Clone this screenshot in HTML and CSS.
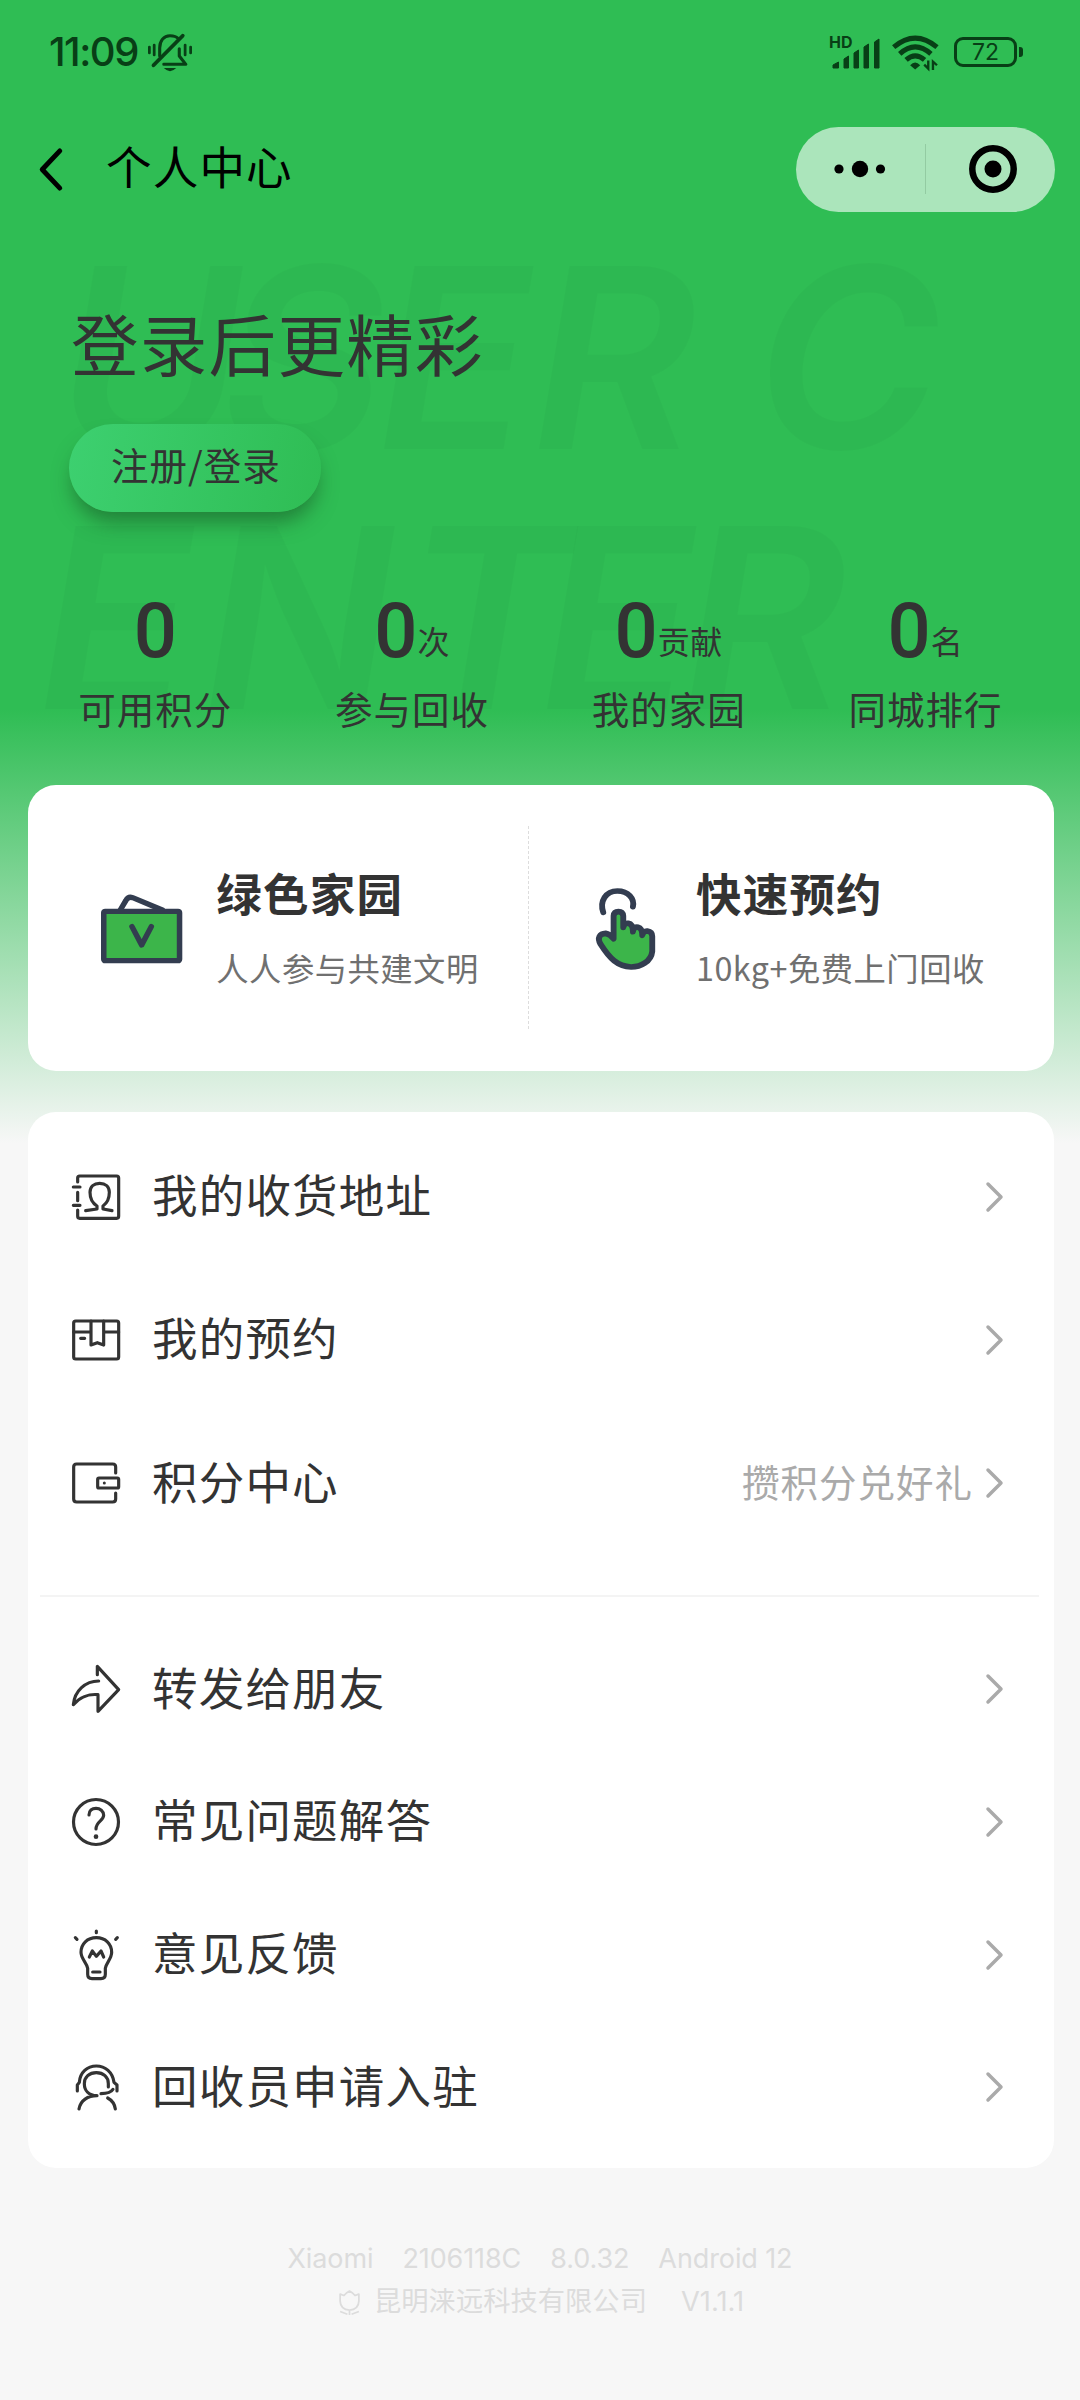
FILE: index.html
```html
<!DOCTYPE html>
<html lang="zh-CN">
<head>
<meta charset="utf-8">
<title>个人中心</title>
<link rel="stylesheet" href="styles.css">
</head>
<body>
<div class="page">
  <div class="watermark" aria-hidden="true"><div class="wm-line wm-first"><span>U</span><span>S</span><span>E</span><span>R</span><span>C</span></div><div class="wm-line wm-second"><span>E</span><span>N</span><span>T</span><span>E</span><span>R</span></div></div>

  <header class="status">
    <span class="time">11:09</span>
    <svg class="bell" viewBox="0 0 128 112" preserveAspectRatio="none" fill="none" stroke="currentColor" stroke-width="9" stroke-linecap="round" stroke-linejoin="round">
      <path d="M4 39V57M18 33V63M108 33V63M124 39V57" stroke-width="8"/>
      <path d="M34 66V42C34 20 46 5 64 5C76 5 84 9 88 14"/>
      <path d="M16 94L101 5" stroke-width="11"/>
      <path d="M91 44V66L110 91H46"/>
      <path d="M46 102H82Q64 121 46 102Z" fill="currentColor" stroke="none"/>
    </svg>
    <span class="spacer"></span>
    <span class="signal"><span class="hd">HD</span>
      <svg viewBox="0 0 50 34" fill="currentColor"><path d="M3 32V29L8.500 26V32ZM14 32V23L18.500 20V32ZM24 32V17L28.500 14V32ZM34 32V11L38.500 8V32ZM44.500 32V6L49 3V32Z" stroke="currentColor" stroke-linejoin="round"/></svg>
    </span>
    <svg class="wifi" viewBox="0 0 140 104" fill="none" stroke="currentColor" stroke-width="15">
      <path d="M5 36Q69-18 134 36"/><path d="M23 56Q69 14 116 56"/><path d="M42 74Q69 50 97 74"/>
      <path d="M54 90Q69 74 84 90L69 103Z" fill="currentColor" stroke="none"/>
      <path d="M96 88L108 100V76M134 90L122 79V104" stroke-width="7"/>
    </svg>
    <span class="battery"><span class="battery-body">72</span><span class="battery-tip"></span></span>
  </header>

  <nav class="nav">
    <svg class="back" viewBox="0 0 24 44" fill="none" stroke="#000" stroke-width="5" stroke-linecap="round" stroke-linejoin="round"><path d="M21 3L3 22L21 41"/></svg>
    <h1 class="nav-title">个人中心</h1>
    <div class="capsule">
      <svg class="dots" viewBox="0 0 52 18"><circle cx="5" cy="9" r="4.6"/><circle cx="26" cy="9" r="8.2"/><circle cx="46.500" cy="9" r="4.600"/></svg>
      <span class="capsule-line"></span>
      <svg class="target" viewBox="0 0 48 48"><circle cx="24" cy="24" r="20.700" fill="none" stroke="#000" stroke-width="6.500"/><circle cx="24" cy="24" r="8.500"/></svg>
    </div>
  </nav>

  <section class="hero">
    <h2 class="hero-title">登录后更精彩</h2>
    <div class="login">注册/登录</div>
    <div class="stats">
      <div class="stat"><div class="num"><b>0</b></div><div class="label">可用积分</div></div>
      <div class="stat"><div class="num"><b>0</b><i>次</i></div><div class="label">参与回收</div></div>
      <div class="stat"><div class="num"><b>0</b><i>贡献</i></div><div class="label">我的家园</div></div>
      <div class="stat"><div class="num"><b>0</b><i>名</i></div><div class="label">同城排行</div></div>
    </div>
  </section>

  <section class="card quick">
    <div class="quick-item">
      <svg class="box-icon" viewBox="0 0 236 208" preserveAspectRatio="none" fill="none" stroke="#333d50" stroke-width="16" stroke-linecap="round" stroke-linejoin="round">
        <path d="M56 48L72 20Q79 6 92 11L178 48"/><rect x="8" y="52" width="220" height="148" rx="4" fill="#3cb54a"/><path d="M90 98L118 153L146 98"/>
      </svg>
      <div><h3>绿色家园</h3><p>人人参与共建文明</p></div>
    </div>
    <span class="quick-line"></span>
    <div class="quick-item quick-right">
      <svg class="hand-icon" viewBox="0 0 171 245" preserveAspectRatio="none" fill="none" stroke="#333d50" stroke-width="17" stroke-linecap="round" stroke-linejoin="round">
        <path d="M21 73C10 40 28 9 62 9C94 9 112 32 107 56"/>
        <path fill="#3cb54a" d="M51 152V84Q52 71 65 71Q78 71 79 84V118Q82 104 94 106Q107 108 107 131Q110 115 122 118Q134 121 134 142Q138 128 149 129Q163 131 163 145V190C160 220 130 237 102 237C62 235 40 212 13 168C3 150 10 137 28 136Q40 138 51 152Z"/>
      </svg>
      <div><h3>快速预约</h3><p>10kg+免费上门回收</p></div>
    </div>
  </section>

  <section class="card menu">
    <div class="row tall">
      <svg class="icon" viewBox="0 0 144 144"><path d="M17 27V15q0-6 6-6H134q6 0 6 6V130q0 6-6 6H23q-6 0-6-6V111M17 58V83M4 42H24M4 97H24M41 113L75 108V99C60 90 54 75 54 58C54 40 66 31 83 31S112 40 112 58C112 75 106 90 93 99V108L120 113"/></svg>
      <span class="name">我的收货地址</span>
      <svg class="arrow" viewBox="0 0 17 30"><path d="M2 2L15 15L2 28"/></svg>
    </div>
    <div class="row tall">
      <svg class="icon" viewBox="0 0 144 144"><rect x="5" y="15" width="135" height="114" rx="6"/><path d="M5 48H57M95 48H140M57 15V87L76 80L95 87V15M26 67H38"/></svg>
      <span class="name">我的预约</span>
      <svg class="arrow" viewBox="0 0 17 30"><path d="M2 2L15 15L2 28"/></svg>
    </div>
    <div class="row tall">
      <svg class="icon" viewBox="0 0 144 144"><path d="M131 42V24q0-9-9-9H14q-9 0-9 9V120q0 9 9 9H122q9 0 9-9V102"/><rect x="77" y="57" width="63" height="30" rx="4"/><circle class="solid" cx="97" cy="72" r="4.500"/></svg>
      <span class="name">积分中心</span>
      <span class="hint">攒积分兑好礼</span>
      <svg class="arrow" viewBox="0 0 17 30"><path d="M2 2L15 15L2 28"/></svg>
    </div>
    <div class="rule"></div>
    <div class="row">
      <svg class="icon" viewBox="0 0 144 144"><path d="M80 48C40 48 8 78 4 119C22 98 50 86 78 89V139L140 74L76 4V29"/></svg>
      <span class="name">转发给朋友</span>
      <svg class="arrow" viewBox="0 0 17 30"><path d="M2 2L15 15L2 28"/></svg>
    </div>
    <div class="row">
      <svg class="icon" viewBox="0 0 144 144"><circle cx="72" cy="72" r="67.500"/><path d="M51 51C51 38 60 31 72 31S95 39 95 52C95 68 72 70 72 93"/><circle class="solid" cx="72" cy="116" r="7"/></svg>
      <span class="name">常见问题解答</span>
      <svg class="arrow" viewBox="0 0 17 30"><path d="M2 2L15 15L2 28"/></svg>
    </div>
    <div class="row">
      <svg class="icon" viewBox="0 0 144 144"><path d="M73 20C46 20 27 39 27 64C27 84 44 94 47 112V130Q47 143 60 143H87Q100 143 100 130V112C103 94 119 84 119 64C119 39 100 20 73 20ZM52 78L61 60L73 76L87 60L95 78M62 123H84M73 0V5M10 20L15 25M136 20L131 25"/></svg>
      <span class="name">意见反馈</span>
      <svg class="arrow" viewBox="0 0 17 30"><path d="M2 2L15 15L2 28"/></svg>
    </div>
    <div class="row">
      <svg class="icon" viewBox="0 0 144 144"><path d="M16 84V66L22 58C24 28 46 9 73 9S122 28 126 58L135 66V84M75 98C50 97 37 82 37 62C37 42 52 29 73 29S109 42 109 62V72M87 92C105 92 118 88 123 79M21 138C25 112 48 98 75 98M107 105C120 112 128 124 130 138"/></svg>
      <span class="name">回收员申请入驻</span>
      <svg class="arrow" viewBox="0 0 17 30"><path d="M2 2L15 15L2 28"/></svg>
    </div>
  </section>

  <footer class="footer">
    <div class="device"><span>Xiaomi</span><span>2106118C</span><span>8.0.32</span><span>Android 12</span></div>
    <div class="company">
      <svg viewBox="0 0 60 72" fill="none" stroke="currentColor" stroke-width="5" stroke-linejoin="round"><path d="M3 12L14 16Q20 8 30 3Q40 8 46 16L57 12V32Q56 56 30 58Q4 56 3 32ZM30 58V72M3 62L24 70M57 62L36 70"/></svg>
      <span>昆明涞远科技有限公司</span><span class="version">V1.1.1</span>
    </div>
  </footer>
</div>
</body>
</html>
```
FILE: styles.css
```css
* { box-sizing: border-box; margin: 0; padding: 0; }
body { background: #f7f7f7; font-family: Inter, "Noto Sans CJK SC", sans-serif; color: #333; }
h1, h2, h3, .login, .label, .num i, .name, .hint { font-family: "Noto Sans CJK SC", sans-serif; white-space: nowrap; }
svg { display: block; flex: none; overflow: visible; }
.page {
  position: relative; width: 1080px; height: 2400px; overflow: hidden;
  display: flex; flex-direction: column;
  background: linear-gradient(#2fbd54 0, #2fbd54 710px, #f7f7f7 1143px);
}

/* faint lettering behind the header */
.watermark { position: absolute; left: 0; top: 228px; width: 1080px; color: rgba(0, 0, 0, .025); font: italic 600 252px/260px Inter, sans-serif; }
.wm-line { display: grid; }
.wm-first { grid-template-columns: 164px 156px 155px 223px 200px; padding-left: 57px; }
.wm-second { grid-template-columns: 165px 200px 137px 142px 200px; padding-left: 38px; }

.status { position: relative; height: 104px; padding: 0 57px 0 49px; display: flex; align-items: center; color: #083f16; }
.time { width: 99px; font-size: 40px; font-weight: 500; letter-spacing: -1.500px; line-height: 104px; white-space: nowrap; }
.bell { width: 44px; height: 37.300px; margin-top: 1px; }
.spacer { flex: 1; }
.signal { position: relative; width: 50px; height: 34px; margin: 1px 12px 0 0; }
.signal svg { width: 50px; height: 34px; }
.hd { position: absolute; left: -1px; top: -2px; font-size: 16px; line-height: 16px; font-weight: 700; }
.wifi { width: 47px; height: 35px; margin: 1px 15px 0 0; }
.battery { display: flex; align-items: center; gap: 2px; }
.battery-body { width: 63px; height: 30px; border: 3px solid; border-radius: 9px; font-size: 23px; font-weight: 400; line-height: 25px; text-align: center; }
.battery-tip { width: 4px; height: 10px; border-radius: 0 3px 3px 0; background: currentColor; }

.nav { position: relative; height: 130px; padding: 0 25px 0 39px; display: flex; align-items: center; }
.back { width: 24px; height: 43px; margin-top: 1px; }
.nav-title { margin: -8px 0 0 43px; font-size: 45.500px; letter-spacing: 1.200px; font-weight: 400; line-height: 60px; color: #000; }
.capsule { margin-left: auto; width: 259px; height: 85px; border-radius: 43px; background: #abe5bb; display: flex; align-items: center; padding: 0 38px; justify-content: space-between; }
.dots { width: 52px; height: 18px; }
.target { width: 48px; height: 48px; }
.capsule-line { width: 1px; height: 50px; background: #93cba2; margin-left: -4px; }

.hero { position: relative; height: 551px; padding-left: 27px; }
.hero-title { margin-left: 44px; padding-top: 58px; font-size: 67.500px; letter-spacing: 1.300px; font-weight: 400; line-height: 100px; }
.login { margin: 32px 0 0 42px; width: 252px; height: 88px; border-radius: 44px; padding-left: 42px; font-size: 37.500px; letter-spacing: 1px; line-height: 80px; background: linear-gradient(100deg, #3dd070, #2fbd54); box-shadow: 0 14px 20px -4px rgba(20, 70, 30, .5); }
.stats { display: grid; grid-template-columns: repeat(4, 256.700px); margin-top: 69px; text-align: center; }
.num { display: flex; justify-content: center; align-items: baseline; height: 100px; line-height: 100px; }
.num b { font: 500 76px/100px Roboto, sans-serif; }
.num i { position: relative; top: -3px; font-style: normal; font-size: 32px; letter-spacing: .500px; }
.label { font-size: 37.500px; letter-spacing: 1px; line-height: 53px; }

.card { position: relative; width: 1026px; margin-left: 28px; background: #fff; border-radius: 28px; flex: none; }
.quick { height: 286px; display: flex; }
.quick-item { width: 500px; padding-left: 73px; display: flex; }
.quick-right { width: 525px; padding-left: 67px; }
.quick-line { width: 1px; height: 204px; margin-top: 41px; background: repeating-linear-gradient(#ddd 0 3px, transparent 3px 5px); }
.box-icon { width: 81.300px; height: 69.300px; margin: 109px 34px 0 0; }
.hand-icon { width: 59px; height: 81.700px; margin: 103px 41px 0 0; }
.quick h3 { margin-top: 73px; font-size: 45.500px; letter-spacing: 1.200px; font-weight: 700; line-height: 68px; }
.quick p { margin-top: 17px; font-size: 32.300px; letter-spacing: .500px; line-height: 48px; color: #707070; white-space: nowrap; font-family: "Noto Sans CJK SC", sans-serif; }

.menu { margin-top: 41px; height: 1056px; padding: 13px 51px 0 44px; }
.row { height: 132.700px; display: flex; align-items: center; }
.row.tall { height: 143.300px; }
.icon { width: 48px; height: 48px; fill: none; stroke: #333; stroke-width: 9.500; stroke-linecap: round; stroke-linejoin: round; }
.solid { fill: #333; stroke: none; }
.name { flex: 1; margin-left: 32px; font-size: 45.500px; letter-spacing: 1.200px; line-height: 60px; margin-top: -7px; }
.hint { font-size: 37.500px; letter-spacing: 1px; line-height: 60px; color: #aaa; margin: -4px 13px 0 0; }
.arrow { width: 17px; height: 30px; fill: none; stroke: #aaa; stroke-width: 3.500; stroke-linecap: round; stroke-linejoin: round; }
.rule { height: 2px; margin: 40px -36px 26px -32px; background: #f4f4f4; }

.footer { color: #dcdcdc; padding-top: 66px; }
.device { display: flex; justify-content: center; gap: 29px; font-size: 27px; line-height: 40px; height: 40px; padding-top: 5px; letter-spacing: -.100px; }
.device span, .company span { white-space: nowrap; }
.company { display: flex; align-items: center; margin: 6px 0 0 339px; font-size: 27.300px; line-height: 44px; }
.company svg { width: 21px; height: 25px; margin-right: 14px; }
.version { margin-left: 34px; }
```
